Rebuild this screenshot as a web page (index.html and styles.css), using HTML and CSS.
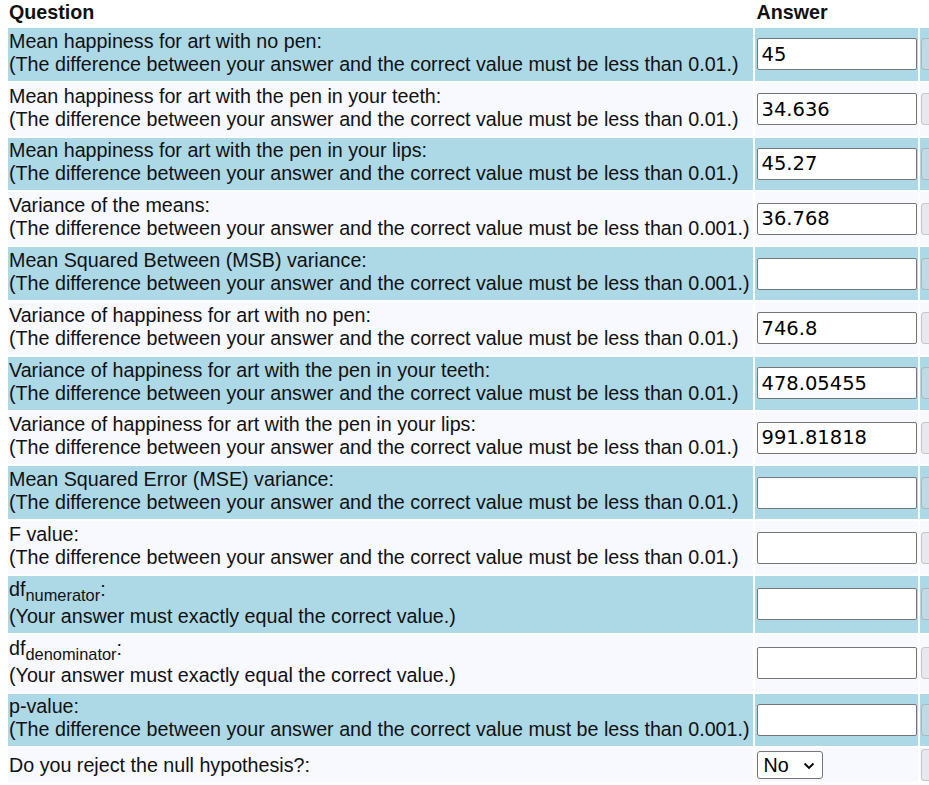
FILE: index.html
```html
<!DOCTYPE html>
<html lang="en">

<head>
    <meta charset="UTF-8">
    <title>One-way ANOVA - pen in teeth</title>
    <link rel="stylesheet" href="styles.css">
</head>

<body>

    <table class="quiz">
        <tr class="head">
            <th class="q">Question</th>
            <th class="a">Answer</th>
            <th class="c"></th>
        </tr>
        <!-- group means -->
        <tr class="odd">
            <td class="q">Mean happiness for art with no pen:<span class="note">(The difference between your answer and the correct value must be less than 0.01.)</span></td>
            <td class="a"><input class="ans" type="text" value="45"></td>
            <td class="c"><button class="check" disabled aria-label="Check"></button></td>
        </tr>
        <tr class="even">
            <td class="q">Mean happiness for art with the pen in your teeth:<span class="note">(The difference between your answer and the correct value must be less than 0.01.)</span></td>
            <td class="a"><input class="ans" type="text" value="34.636"></td>
            <td class="c"><button class="check" disabled aria-label="Check"></button></td>
        </tr>
        <tr class="odd">
            <td class="q">Mean happiness for art with the pen in your lips:<span class="note">(The difference between your answer and the correct value must be less than 0.01.)</span></td>
            <td class="a"><input class="ans" type="text" value="45.27"></td>
            <td class="c"><button class="check" disabled aria-label="Check"></button></td>
        </tr>
        <tr class="even">
            <td class="q">Variance of the means:<span class="note">(The difference between your answer and the correct value must be less than 0.001.)</span></td>
            <td class="a"><input class="ans" type="text" value="36.768"></td>
            <td class="c"><button class="check" disabled aria-label="Check"></button></td>
        </tr>
        <tr class="odd">
            <td class="q">Mean Squared Between (MSB) variance:<span class="note">(The difference between your answer and the correct value must be less than 0.001.)</span></td>
            <td class="a"><input class="ans" type="text" value=""></td>
            <td class="c"><button class="check" disabled aria-label="Check"></button></td>
        </tr>
        <!-- group variances -->
        <tr class="even">
            <td class="q">Variance of happiness for art with no pen:<span class="note">(The difference between your answer and the correct value must be less than 0.01.)</span></td>
            <td class="a"><input class="ans" type="text" value="746.8"></td>
            <td class="c"><button class="check" disabled aria-label="Check"></button></td>
        </tr>
        <tr class="odd">
            <td class="q">Variance of happiness for art with the pen in your teeth:<span class="note">(The difference between your answer and the correct value must be less than 0.01.)</span></td>
            <td class="a"><input class="ans" type="text" value="478.05455"></td>
            <td class="c"><button class="check" disabled aria-label="Check"></button></td>
        </tr>
        <tr class="even">
            <td class="q">Variance of happiness for art with the pen in your lips:<span class="note">(The difference between your answer and the correct value must be less than 0.01.)</span></td>
            <td class="a"><input class="ans" type="text" value="991.81818"></td>
            <td class="c"><button class="check" disabled aria-label="Check"></button></td>
        </tr>
        <tr class="odd">
            <td class="q">Mean Squared Error (MSE) variance:<span class="note">(The difference between your answer and the correct value must be less than 0.01.)</span></td>
            <td class="a"><input class="ans" type="text" value=""></td>
            <td class="c"><button class="check" disabled aria-label="Check"></button></td>
        </tr>
        <!-- test statistic -->
        <tr class="even">
            <td class="q">F value:<span class="note">(The difference between your answer and the correct value must be less than 0.01.)</span></td>
            <td class="a"><input class="ans" type="text" value=""></td>
            <td class="c"><button class="check" disabled aria-label="Check"></button></td>
        </tr>
        <tr class="odd">
            <td class="q">df<sub>numerator</sub>:<span class="note">(Your answer must exactly equal the correct value.)</span></td>
            <td class="a"><input class="ans" type="text" value=""></td>
            <td class="c"><button class="check" disabled aria-label="Check"></button></td>
        </tr>
        <tr class="even">
            <td class="q">df<sub>denominator</sub>:<span class="note">(Your answer must exactly equal the correct value.)</span></td>
            <td class="a"><input class="ans" type="text" value=""></td>
            <td class="c"><button class="check" disabled aria-label="Check"></button></td>
        </tr>
        <tr class="odd">
            <td class="q">p-value:<span class="note">(The difference between your answer and the correct value must be less than 0.001.)</span></td>
            <td class="a"><input class="ans" type="text" value=""></td>
            <td class="c"><button class="check" disabled aria-label="Check"></button></td>
        </tr>
        <tr class="even">
            <td class="q">Do you reject the null hypothesis?:</td>
            <td class="a">
                <span class="pick">
                    <select class="yesno">
                        <option selected>No</option>
                        <option>Yes</option>
                    </select>
                    <svg class="caret" width="12" height="8" viewBox="0 0 12 8"><path d="M1.5 1.5 L6 6 L10.5 1.5" fill="none" stroke="#000" stroke-width="1.8"/></svg>
                </span>
            </td>
            <td class="c"><button class="check" disabled aria-label="Check"></button></td>
        </tr>
    </table>

</body>

</html>
```

FILE: styles.css
```css
body {
    margin: 0;
    overflow: hidden;
    background: #fff;
    color: #111;
    font-family: "Liberation Sans", Arial, sans-serif;
    font-size: 19.7px;
    line-height: 23px;
}

.quiz {
    border-spacing: 2px;
    margin: -2.4px 0 0 6px;
    white-space: nowrap;
}

.quiz th {
    text-align: left;
    font-weight: bold;
    padding: 1px 1px 2.4px 1px;
}

.quiz td {
    padding: 1px;
    vertical-align: middle;
}

.quiz td.q {
    padding: 1.8px 3px 1px 1px;
}

.quiz th.q {
    padding-right: 3px;
}

.quiz td.a,
.quiz th.a {
    padding-left: 2px;
    padding-right: 1px;
}

.odd td {
    background-color: #add8e6;
}

.even td {
    background-color: #f8f8ff;
}

.note {
    display: block;
    margin-bottom: 4px;
}

sub {
    font-size: 16.4px;
    line-height: 19px;
    vertical-align: -5px;
}

.ans {
    display: block;
    box-sizing: border-box;
    width: 160px;
    height: 32px;
    margin: 0;
    padding: 0 4px;
    border: 1px solid #767676;
    border-radius: 2px;
    background: #fff;
    color: #000;
    font-family: "DejaVu Sans", Verdana, sans-serif;
    font-size: 19.5px;
}

.check {
    display: block;
    box-sizing: border-box;
    width: 90px;
    height: 32px;
    margin: 0;
    border: 1px solid rgba(118, 118, 118, 0.3);
    border-radius: 4px;
    background-color: rgba(215, 215, 222, 0.5);
}

.pick {
    position: relative;
    display: inline-block;
    vertical-align: middle;
}

.yesno {
    -webkit-appearance: none;
    appearance: none;
    display: block;
    box-sizing: border-box;
    width: 66px;
    height: 28px;
    margin: 0;
    padding: 0 0 0 6px;
    border: 1px solid #767676;
    border-radius: 3px;
    background: #fff;
    color: #000;
    font-family: "Liberation Sans", Arial, sans-serif;
    font-size: 19.7px;
}

.caret {
    position: absolute;
    right: 8px;
    top: 11px;
    pointer-events: none;
}
```
